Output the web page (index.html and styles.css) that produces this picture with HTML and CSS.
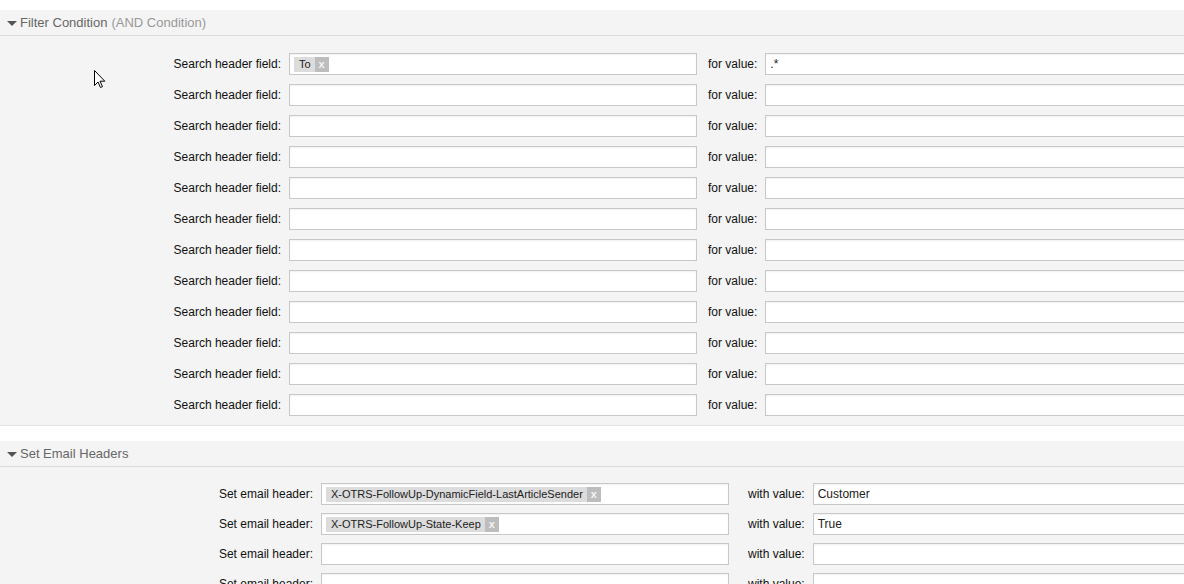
FILE: index.html
```html
<!DOCTYPE html>
<html lang="en">
<head>
  <meta charset="UTF-8">
  <title>Postmaster Filter</title>
  <link rel="stylesheet" href="styles.css">
</head>
<body>
  <!-- Filter conditions -->
  <div class="widget">
    <div class="header"><span class="arrow"></span>Filter Condition <span class="sub">(AND Condition)</span></div>
    <div class="content match">
      <div class="row">
        <label>Search header field:</label>
        <div class="field"><span class="tag">To<span class="rm">x</span></span></div>
        <label class="second">for value:</label>
        <div class="field wide">.*</div>
      </div>
      <div class="row"><label>Search header field:</label><div class="field"></div><label class="second">for value:</label><div class="field wide"></div></div>
      <div class="row"><label>Search header field:</label><div class="field"></div><label class="second">for value:</label><div class="field wide"></div></div>
      <div class="row"><label>Search header field:</label><div class="field"></div><label class="second">for value:</label><div class="field wide"></div></div>
      <div class="row"><label>Search header field:</label><div class="field"></div><label class="second">for value:</label><div class="field wide"></div></div>
      <div class="row"><label>Search header field:</label><div class="field"></div><label class="second">for value:</label><div class="field wide"></div></div>
      <div class="row"><label>Search header field:</label><div class="field"></div><label class="second">for value:</label><div class="field wide"></div></div>
      <div class="row"><label>Search header field:</label><div class="field"></div><label class="second">for value:</label><div class="field wide"></div></div>
      <div class="row"><label>Search header field:</label><div class="field"></div><label class="second">for value:</label><div class="field wide"></div></div>
      <div class="row"><label>Search header field:</label><div class="field"></div><label class="second">for value:</label><div class="field wide"></div></div>
      <div class="row"><label>Search header field:</label><div class="field"></div><label class="second">for value:</label><div class="field wide"></div></div>
      <div class="row"><label>Search header field:</label><div class="field"></div><label class="second">for value:</label><div class="field wide"></div></div>
    </div>
  </div>

  <!-- Set headers -->
  <div class="widget">
    <div class="header"><span class="arrow"></span>Set Email Headers</div>
    <div class="content set">
      <div class="row">
        <label>Set email header:</label>
        <div class="field"><span class="tag">X-OTRS-FollowUp-DynamicField-LastArticleSender<span class="rm">x</span></span></div>
        <label class="second">with value:</label>
        <div class="field wide">Customer</div>
      </div>
      <div class="row">
        <label>Set email header:</label>
        <div class="field"><span class="tag">X-OTRS-FollowUp-State-Keep<span class="rm">x</span></span></div>
        <label class="second">with value:</label>
        <div class="field wide">True</div>
      </div>
      <div class="row"><label>Set email header:</label><div class="field"></div><label class="second">with value:</label><div class="field wide"></div></div>
      <div class="row"><label>Set email header:</label><div class="field"></div><label class="second">with value:</label><div class="field wide"></div></div>
    </div>
  </div>

  <svg class="cursor" width="12" height="19" viewBox="0 0 12 19">
    <path d="M0.5 0.5 L0.5 15.5 L4 12 L6.5 17.5 L8.5 16.6 L6 11.2 L10.8 11.2 Z" fill="#fff" stroke="#000" stroke-width="1"/>
  </svg>
</body>
</html>
```

FILE: styles.css
```css
body {
  margin: 0;
  padding-top: 10px;
  font-family: "Liberation Sans", Arial, sans-serif;
  font-size: 12px;
  color: #111;
  background: #fff;
  overflow: hidden;
  position: relative;
  height: 584px;
}
.widget {
  background: #f4f4f4;
  margin-bottom: 15px;
}
.header {
  height: 25px;
  line-height: 24px;
  font-size: 13px;
  color: #666;
  border-bottom: 1px solid #dcdcdc;
  padding-left: 7px;
  display: flex;
  align-items: center;
}
.header .sub {
  color: #999;
  margin-left: 4px;
}
.arrow {
  width: 0;
  height: 0;
  border-left: 5px solid transparent;
  border-right: 5px solid transparent;
  border-top: 5px solid #555;
  margin-right: 3px;
  margin-top: 1px;
}
.content {
  padding: 17px 0 0;
  border-bottom: 1px solid #e2e2e2;
}
.content.set {
  padding-top: 16px;
}
.row {
  display: flex;
  align-items: center;
  height: 22px;
  margin-bottom: 9px;
  white-space: nowrap;
}
.set .row {
  margin-bottom: 8px;
}
.row label {
  text-align: right;
  padding-right: 8px;
  box-sizing: border-box;
  flex: none;
  width: 289px;
}
.set .row label {
  width: 321px;
}
.row label.second {
  width: auto;
  text-align: left;
  padding-right: 8px;
  margin-left: 11px;
}
.set .row label.second {
  margin-left: 19px;
}
.field {
  flex: none;
  width: 408px;
  height: 22px;
  box-sizing: border-box;
  background: #fff;
  border: 1px solid #c8c8c8;
  box-shadow: inset 0 1px 2px rgba(0, 0, 0, 0.06);
  display: flex;
  align-items: center;
  padding-left: 4px;
  color: #222;
}
.field.wide {
  width: 600px;
}
.tag {
  display: inline-flex;
  align-items: center;
  height: 15px;
  background: #dcdcdc;
  font-size: 11px;
  color: #222;
  padding-left: 5px;
}
.tag .rm {
  display: inline-block;
  width: 14px;
  height: 15px;
  line-height: 14px;
  text-align: center;
  margin-left: 4px;
  background: #bdbdbd;
  color: #f4f4f4;
  font-weight: bold;
}
.cursor {
  position: absolute;
  left: 94px;
  top: 70px;
}
```
